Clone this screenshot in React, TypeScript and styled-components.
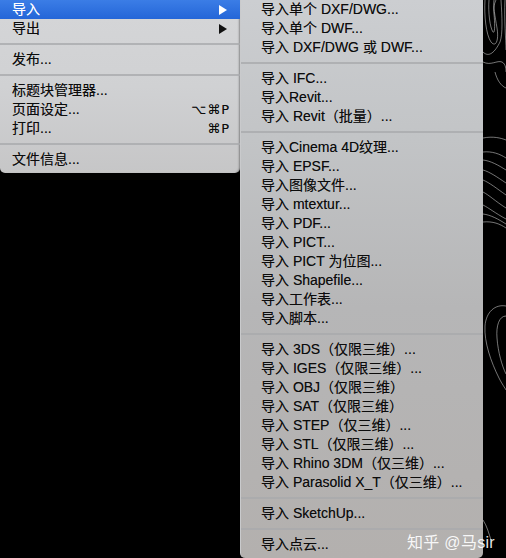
import React from 'react';
import styled, { createGlobalStyle } from 'styled-components';

const Global = createGlobalStyle`
  html, body { margin: 0; padding: 0; background: #000; }
  body { font-family: "Liberation Sans", "Noto Sans CJK SC", sans-serif; }
`;

type Item =
  | { kind: 'sep' }
  | { kind: 'item'; label: string; shortcut?: string; arrow?: boolean; active?: boolean };

const sep: Item = { kind: 'sep' };
const it = (label: string, extra: Partial<Extract<Item, { kind: 'item' }>> = {}): Item => ({
  kind: 'item',
  label,
  ...extra,
});

const mainItems: Item[] = [
  it('导入', { arrow: true, active: true }),
  it('导出', { arrow: true }),
  sep,
  it('发布...'),
  sep,
  it('标题块管理器...'),
  it('页面设定...', { shortcut: '⌥⌘P' }),
  it('打印...', { shortcut: '⌘P' }),
  sep,
  it('文件信息...'),
];

const subItems: Item[] = [
  it('导入单个 DXF/DWG...'),
  it('导入单个 DWF...'),
  it('导入 DXF/DWG 或 DWF...'),
  sep,
  it('导入 IFC...'),
  it('导入Revit...'),
  it('导入 Revit（批量）...'),
  sep,
  it('导入Cinema 4D纹理...'),
  it('导入 EPSF...'),
  it('导入图像文件...'),
  it('导入 mtextur...'),
  it('导入 PDF...'),
  it('导入 PICT...'),
  it('导入 PICT 为位图...'),
  it('导入 Shapefile...'),
  it('导入工作表...'),
  it('导入脚本...'),
  sep,
  it('导入 3DS（仅限三维）...'),
  it('导入 IGES（仅限三维）...'),
  it('导入 OBJ（仅限三维）'),
  it('导入 SAT（仅限三维）'),
  it('导入 STEP（仅三维）...'),
  it('导入 STL（仅限三维）...'),
  it('导入 Rhino 3DM（仅三维）...'),
  it('导入 Parasolid X_T（仅三维）...'),
  sep,
  it('导入 SketchUp...'),
  sep,
  it('导入点云...'),
];

const Screen = styled.div`
  position: relative;
  width: 506px;
  height: 558px;
  overflow: hidden;
  background: #000;
  display: flex;
  align-items: flex-start;
`;

const MainMenu = styled.div`
  width: 240px;
  flex: none;
  padding-bottom: 4px;
  background: linear-gradient(180deg, #d5d6d8 0%, #d0d1d3 50%, #c6c6c7 100%);
  border-bottom-left-radius: 5px;
  border-bottom-right-radius: 5px;
  box-shadow: inset -2px 0 2px -1px rgba(0, 0, 0, 0.35);
`;

const SubMenu = styled.div`
  width: 243px;
  height: 558px;
  flex: none;
  box-sizing: border-box;
  background: linear-gradient(180deg, #ccced1 0%, #c2c4c6 25%, #b6b6b7 55%, #b3b0ae 100%);
  border-left: 1px solid #c9cacc;
  border-bottom-left-radius: 5px;
  border-bottom-right-radius: 5px;
`;

const Row = styled.div<{ $active?: boolean; $indent: number }>`
  height: 19px;
  display: flex;
  align-items: center;
  padding: 0 10px 0 ${(p) => p.$indent}px;
  font-size: 14px;
  line-height: 19px;
  white-space: nowrap;
  color: ${(p) => (p.$active ? '#ffffff' : '#0c0c0c')};
  text-shadow: ${(p) => (p.$active ? '0 0 0.5px rgba(255,255,255,0.6)' : '0 0 0.6px rgba(0,0,0,0.45)')};
  background: ${(p) => (p.$active ? 'linear-gradient(180deg, #3b7de6 0%, #2466d8 100%)' : 'transparent')};
`;

const Label = styled.span`
  flex: 1;
`;

const Shortcut = styled.span`
  font-family: "DejaVu Sans", "Liberation Sans", sans-serif;
  font-size: 13px;
  letter-spacing: 1px;
`;

const Arrow = styled.span<{ $active?: boolean }>`
  width: 0;
  height: 0;
  margin-right: 3px;
  border-top: 5px solid transparent;
  border-bottom: 5px solid transparent;
  border-left: 8px solid ${(p) => (p.$active ? '#ffffff' : '#111111')};
`;

const Separator = styled.div`
  height: 12px;
  display: flex;
  align-items: center;
  &::after {
    content: '';
    flex: 1;
    height: 2px;
    background: #a9aaac;
    opacity: 0.8;
  }
`;

const Strip = styled.div`
  flex: 1;
  height: 558px;
  display: flex;
`;

const Watermark = styled.div`
  position: absolute;
  right: 11px;
  bottom: 5px;
  font-size: 16px;
  line-height: 20px;
  letter-spacing: 0.3px;
  color: rgba(255, 255, 255, 0.92);
  font-family: "Liberation Sans", "Noto Sans CJK SC", sans-serif;
  white-space: nowrap;
`;

function MenuList({ items, indent }: { items: Item[]; indent: number }) {
  return (
    <>
      {items.map((item, i) =>
        item.kind === 'sep' ? (
          <Separator key={i} />
        ) : (
          <Row key={i} $active={item.active} $indent={indent}>
            <Label>{item.label}</Label>
            {item.shortcut && <Shortcut>{item.shortcut}</Shortcut>}
            {item.arrow && <Arrow $active={item.active} />}
          </Row>
        )
      )}
    </>
  );
}

function Contours() {
  const s = { fill: 'none', stroke: 'rgba(225,225,225,0.75)', strokeWidth: 0.7 } as const;
  return (
    <svg width="23" height="558" viewBox="0 0 23 558">
      <path {...s} d="M2 0 C1 15 3 35 8 42 C13 48 16 40 14 28 C12 16 10 6 11 0" />
      <path {...s} d="M6 0 C5 12 7 28 10 32 C12 34 12 24 11 14 C10 7 12 2 13 0" />
      <path {...s} d="M0 52 C6 58 12 52 17 42 C20 34 19 16 18 0" />
      <path {...s} d="M22 0 C21 20 23 40 23 50" />
      <path {...s} d="M0 62 C8 66 14 60 19 62 C23 64 23 70 23 72" />
      <path {...s} d="M12 72 C14 80 18 86 23 88" />
      <path {...s} d="M0 138 C10 136 18 138 23 140" />
      <path {...s} d="M0 152 C9 151 17 154 23 158" />
      <path {...s} d="M0 160 C8 161 15 165 23 170" />
      <path {...s} d="M0 170 C7 172 14 177 23 183" />
      <path {...s} d="M0 180 C7 183 13 188 23 195" />
      <path {...s} d="M0 192 C6 195 12 201 23 208" />
      <path {...s} d="M0 205 C6 208 12 213 23 219" />
      <path {...s} d="M0 214 C8 215 15 219 23 224" />
      <path {...s} d="M0 222 C10 221 17 224 23 228" />
      <path {...s} d="M23 306 C12 304 3 312 2 326 C1 342 8 362 16 378 C19 384 22 388 23 390" />
      <path {...s} d="M23 316 C16 316 13 326 14 338 C15 352 19 366 23 374" />
      <path {...s} d="M0 520 C4 526 6 534 8 540" />
    </svg>
  );
}

export default function App() {
  return (
    <>
      <Global />
      <Screen>
        <MainMenu>
          <MenuList items={mainItems} indent={12} />
        </MainMenu>
        <SubMenu>
          <MenuList items={subItems} indent={20} />
        </SubMenu>
        <Strip>
          <Contours />
        </Strip>
        <Watermark>知乎 @马sir</Watermark>
      </Screen>
    </>
  );
}
